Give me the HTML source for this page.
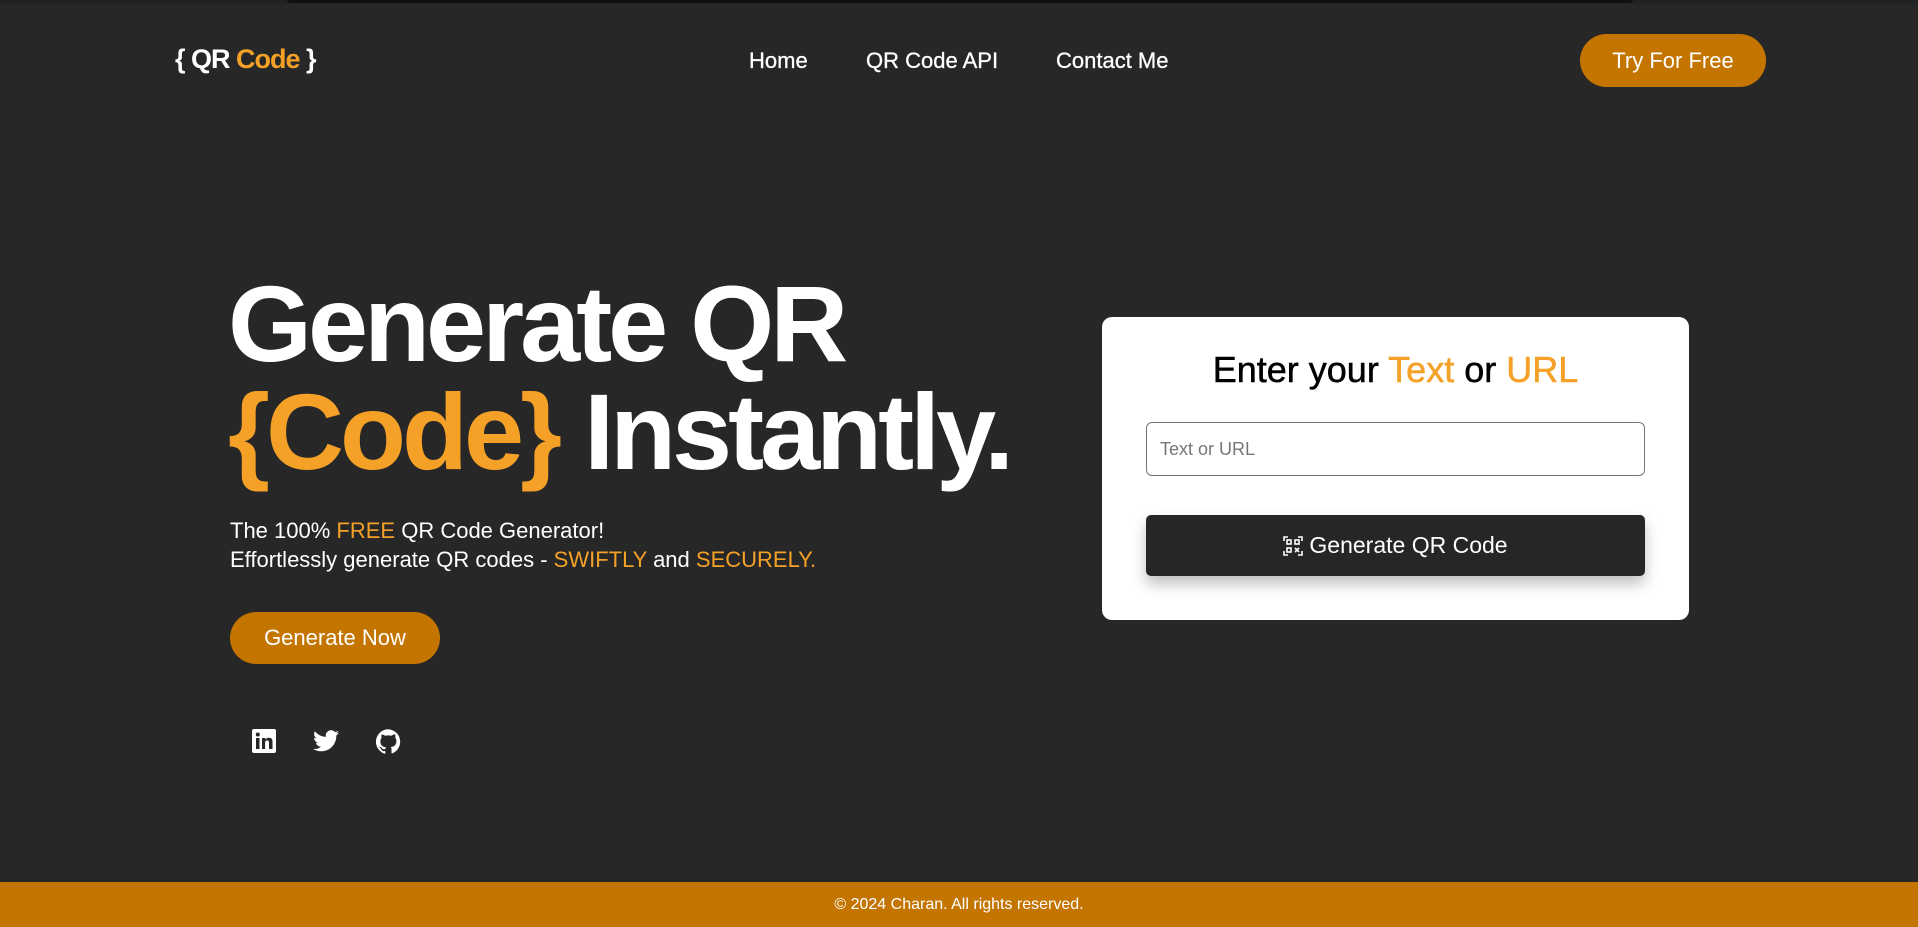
<!DOCTYPE html>
<html><head><meta charset="utf-8">
<style>
*{margin:0;padding:0;box-sizing:border-box}
body{width:1918px;height:927px;background:#272727;font-family:"Liberation Sans",sans-serif;color:#fff;position:relative;overflow:hidden}
.strip{position:absolute;left:0;top:0;width:1918px;height:4px;background:#1f2326}
.strip div{position:absolute;left:287px;width:1346px;top:0;height:3px;background:#0e1013;border-radius:0 0 4px 4px}
.abs{position:absolute}
.logo{left:175px;top:44px;font-size:27px;letter-spacing:-1px;font-weight:bold}
.o{color:#f5a128}
.nav{top:48px;font-size:22px;-webkit-text-stroke:0.3px #fff}
.btn{background:#c47500;border-radius:30px;display:flex;align-items:center;justify-content:center;color:#fff}
h1{position:absolute;left:228px;top:270px;font-size:108px;font-weight:bold;line-height:108px;letter-spacing:-4px}
.sub{left:230px;top:516px;font-size:22px;line-height:29px}
.card{left:1102px;top:317px;width:587px;height:303px;background:#fff;border-radius:10px}
</style></head><body>
<div class="strip"><div></div></div>
<div class="abs logo">{ QR <span class="o">Code</span> }</div>
<div class="abs nav" style="left:749px">Home</div>
<div class="abs nav" style="left:866px">QR Code API</div>
<div class="abs nav" style="left:1056px">Contact Me</div>
<div class="abs btn" style="left:1580px;top:34px;width:186px;height:53px;font-size:22px">Try For Free</div>
<h1>Generate QR<br><span class="o">{Code}</span> Instantly.</h1>
<div class="abs sub">The 100% <span class="o">FREE</span> QR Code Generator!<br>Effortlessly generate QR codes - <span class="o">SWIFTLY</span> and <span class="o">SECURELY.</span></div>
<div class="abs btn" style="left:230px;top:612px;width:210px;height:52px;font-size:22px">Generate Now</div>
<svg class="abs" style="left:252px;top:729px" width="24" height="24" viewBox="0 0 24 24"><rect x="0" y="0" width="24" height="24" rx="2" fill="#fff"/><rect x="4" y="9" width="3.5" height="11" fill="#272727"/><circle cx="5.8" cy="5.5" r="2" fill="#272727"/><path d="M10 9h3.3v1.6c.6-1 1.8-1.9 3.6-1.9 3.2 0 3.6 2.1 3.6 4.8V20H17v-5.6c0-1.4 0-3-1.8-3s-2.1 1.4-2.1 2.9V20H10z" fill="#272727"/></svg>
<svg class="abs" style="left:313px;top:730px" width="26" height="22" viewBox="0 0 24 20"><path fill="#fff" d="M24 2.4c-.9.4-1.8.7-2.8.8 1-.6 1.8-1.6 2.2-2.7-1 .6-2 1-3.1 1.2A4.9 4.9 0 0 0 11.9 6.2 14 14 0 0 1 1.7 1a4.9 4.9 0 0 0 1.5 6.6c-.8 0-1.6-.2-2.2-.6 0 2.4 1.700 4.4 3.900 4.800-.7.2-1.500.2-2.200.1.600 2 2.400 3.400 4.600 3.400A9.900 9.900 0 0 1 0 17.300 14 14 0 0 0 7.500 19.500c9.100 0 14-7.500 14-14v-.6c1-.7 1.800-1.600 2.500-2.500z"/></svg>
<svg class="abs" style="left:376px;top:729px" width="25" height="25" viewBox="0 0 24 24"><path fill="#fff" d="M12 .3a12 12 0 0 0-3.8 23.4c.6.1.8-.3.8-.6v-2c-3.3.7-4-1.600-4-1.600-.6-1.400-1.400-1.800-1.400-1.800-1-.7.1-.7.1-.7 1.200.1 1.800 1.200 1.800 1.200 1 1.800 2.800 1.300 3.500 1 .1-.8.400-1.300.700-1.600-2.700-.3-5.500-1.300-5.500-5.900 0-1.300.5-2.400 1.200-3.200-.1-.3-.5-1.500.1-3.200 0 0 1-.3 3.300 1.200a11.500 11.500 0 0 1 6 0C17.300 4.700 18.300 5 18.300 5c.7 1.700.2 2.900.1 3.200.8.800 1.200 1.900 1.200 3.200 0 4.600-2.800 5.600-5.500 5.900.4.400.8 1.100.8 2.200v3.300c0 .3.2.7.8.6A12 12 0 0 0 12 .3z"/></svg>
<div class="abs card">
<div style="position:absolute;left:0;width:100%;top:32px;text-align:center;font-size:36px;color:#000;-webkit-text-stroke:0.5px">Enter your <span class="o" style="-webkit-text-stroke-color:#f5a128">Text</span> or <span class="o" style="-webkit-text-stroke-color:#f5a128">URL</span></div>
<div style="position:absolute;left:44px;top:105px;width:499px;height:54px;border:1px solid #777;border-radius:6px;padding-left:13px;line-height:52px;font-size:18px;color:#777">Text or URL</div>
<div style="position:absolute;left:44px;top:198px;width:499px;height:61px;background:#262626;border-radius:5px;box-shadow:0 8px 14px rgba(0,0,0,.25);display:flex;align-items:center;justify-content:center;font-size:23px;color:#fff">
<svg width="20" height="20" viewBox="0 0 20 20" style="margin-right:6px"><g fill="none" stroke="#fff" stroke-width="1.6"><path d="M1 5V1h4M15 1h4v4M19 15v4h-4M5 19H1v-4"/><rect x="4" y="4" width="4" height="4"/><rect x="12" y="4" width="4" height="4"/><rect x="4" y="12" width="4" height="4"/><path d="M12 12l4 4M16 12l-4 4"/></g></svg>Generate QR Code</div>
</div>
<div class="abs" style="left:0;top:882px;width:1918px;height:45px;background:#c47500;text-align:center;line-height:45px;font-size:16px">© 2024 Charan. All rights reserved.</div>
</body></html>
